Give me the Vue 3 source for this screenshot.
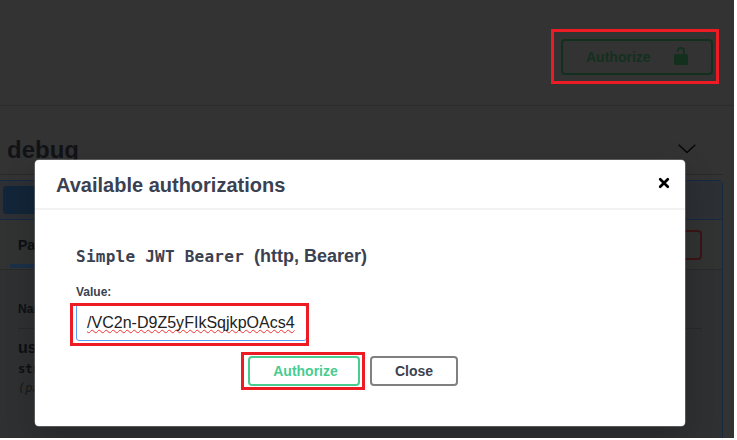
<script setup>
import { ref } from 'vue'

const token = ref('/VC2n-D9Z5yFIkSqjkpOAcs4')
</script>

<template>
  <div class="scene">
    <header class="topbar">
      <button class="top-auth">
        <span>Authorize</span>
        <svg width="14" height="19" viewBox="0 0 14 19">
          <path d="M4 5.500V4.500C4 2.700 5.200 2 7 2s3 .7 3 2.500V9" fill="none" stroke="#13301f" stroke-width="2" />
          <rect x="0" y="8" width="14" height="11" rx="1.500" fill="#13301f" />
        </svg>
      </button>
    </header>
    <main class="section">
      <div class="tag">
        <h3>debug</h3>
        <svg width="18" height="10" viewBox="0 0 18 10">
          <path d="M.7.7 9 8.500 17.300.7" fill="none" stroke="#080808" stroke-width="1.500" />
        </svg>
      </div>
      <div class="operation">
        <div class="summary"><div class="method"></div></div>
        <div class="tabs">
          <span class="tab">Parameters</span>
          <div class="cancel"></div>
        </div>
        <div class="params">
          <div class="col-title">Name</div>
          <div class="name">username</div>
          <div class="type">string</div>
          <div class="place">(path)</div>
        </div>
      </div>
    </main>

    <section class="modal">
      <div class="modal-head">
        <h2>Available authorizations</h2>
        <svg width="12" height="12" viewBox="0 0 12 12">
          <path d="M2.200 2.200 9.800 9.800M9.800 2.200 2.200 9.800" stroke="#000" stroke-width="2.700" stroke-linecap="round" />
        </svg>
      </div>
      <div class="modal-body">
        <h4><code>Simple JWT Bearer</code><span>(http, Bearer)</span></h4>
        <label>Value:</label>
        <div class="field"><span class="token">{{ token }}</span></div>
        <div class="actions">
          <button class="btn green">Authorize</button>
          <button class="btn">Close</button>
        </div>
      </div>
    </section>

    <div class="mark mark-top"></div>
    <div class="mark mark-field"></div>
    <div class="mark mark-button"></div>
  </div>
</template>

<style>
body { background: #fff; }
</style>

<style scoped>
* { box-sizing: border-box; }
h2, h3, h4 { margin: 0; }
.scene {
  position: relative;
  width: 734px;
  height: 438px;
  overflow: hidden;
  background: #333;
  font-family: "Liberation Sans", Arial, sans-serif;
}
.topbar {
  height: 106px;
  padding: 39px 21px 0 0;
  display: flex;
  justify-content: flex-end;
  border-bottom: 1px solid #2c2c2c;
}
.top-auth {
  width: 152px;
  height: 36px;
  padding: 0 23px 0 23px;
  display: flex;
  align-items: center;
  justify-content: space-between;
  border: 2px solid #13301f;
  border-radius: 4px;
  background: transparent;
  color: #13301f;
  font: bold 14px "Liberation Sans", Arial, sans-serif;
}
.top-auth svg { margin-top: -3px; }
.section { padding-right: 11px; }
.tag {
  height: 69px;
  padding: 27px 27px 0 7px;
  display: flex;
  justify-content: space-between;
  border-bottom: 1px solid #292929;
  color: #121317;
}
.tag h3 { font-size: 24px; line-height: 34px; }
.tag svg { margin-top: 11px; }
.operation {
  height: 280px;
  margin-top: 5px;
  margin-left: -4px;
  border: 1px solid #162a40;
  border-radius: 4px;
  background: #2e3032;
}
.summary {
  height: 39px;
  padding: 5px 6px;
  border-bottom: 1px solid #162a40;
  background: #2c2f33;
}
.method { width: 80px; height: 28px; border-radius: 3px; background: #132538; }
.tabs {
  height: 50px;
  display: flex;
  justify-content: space-between;
  padding: 0 20px 0 13px;
  background: #303331;
  border-bottom: 1px solid #292b2a;
}
.tab {
  height: 48px;
  padding: 16px 20px 0 8px;
  border-bottom: 4px solid #1b3047;
  color: #0e0f12;
  font-size: 14px;
  font-weight: bold;
  line-height: 18px;
}
.cancel { width: 100px; height: 30px; margin-top: 10px; border: 2px solid #3b1415; border-radius: 4px; }
.params { padding: 32px 20px 0 21px; color: #0e0f12; }
.col-title { height: 27px; border-bottom: 1px solid #27292b; font-size: 12px; font-weight: bold; line-height: 15px; }
.name { margin-top: 10px; font-size: 16px; font-weight: bold; line-height: 18px; }
.type { margin-top: 4px; font: bold 12px/16px "DejaVu Sans Mono", monospace; }
.place { margin-top: 3px; color: #181818; font: italic 12px/16px "DejaVu Sans Mono", monospace; }
.modal {
  position: absolute;
  left: 35px;
  top: 160px;
  width: 650px;
  height: 266px;
  background: #fff;
  border-radius: 4px;
  box-shadow: 0 0 0 .5px #888, 0 10px 30px rgba(0, 0, 0, .2);
  color: #3b4151;
}
.modal-head {
  height: 50px;
  padding: 0 15px 0 21px;
  display: flex;
  align-items: center;
  justify-content: space-between;
  border-bottom: 2px solid #f3f3f3;
}
.modal-head h2 { padding-top: 2px; font-size: 20px; line-height: 24px; }
.modal-head svg { margin-top: -3px; }
.modal-body { padding: 34px 41px 0; }
h4 { display: flex; align-items: baseline; height: 25px; line-height: 25px; font-size: 18px; }
h4 code { width: 178px; font: bold 16px/25px "DejaVu Sans Mono", monospace; letter-spacing: .25px; white-space: nowrap; }
label { display: block; margin-top: 15px; height: 17px; font-size: 12px; font-weight: bold; line-height: 17px; }
.field {
  width: 231px;
  height: 37px;
  margin-top: 3px;
  padding: 9px 10px 0;
  border: 1px solid #5f9cf7;
  border-radius: 3px;
  color: #222;
  font-size: 16px;
  line-height: 18px;
  white-space: nowrap;
}
.token {
  letter-spacing: .02px;
  text-decoration: underline wavy #e33 1px;
  text-underline-offset: 1px;
  text-decoration-skip-ink: none;
}
.actions { display: flex; gap: 10px; margin: 15px 0 0 172px; }
.btn {
  width: 88px;
  height: 30px;
  padding: 0;
  border: 2px solid #808080;
  border-radius: 4px;
  background: #fff;
  color: #3b4151;
  font: bold 14px "Liberation Sans", Arial, sans-serif;
}
.btn.green { width: 112px; padding-left: 3px; border-color: #49cc90; color: #49cc90; }
.mark { position: absolute; border: 3px solid #ed1c24; }
.mark-top { left: 551px; top: 29px; width: 168px; height: 55px; }
.mark-field { left: 70px; top: 303px; width: 239px; height: 43px; }
.mark-button { left: 241px; top: 352px; width: 124px; height: 38px; }
</style>
